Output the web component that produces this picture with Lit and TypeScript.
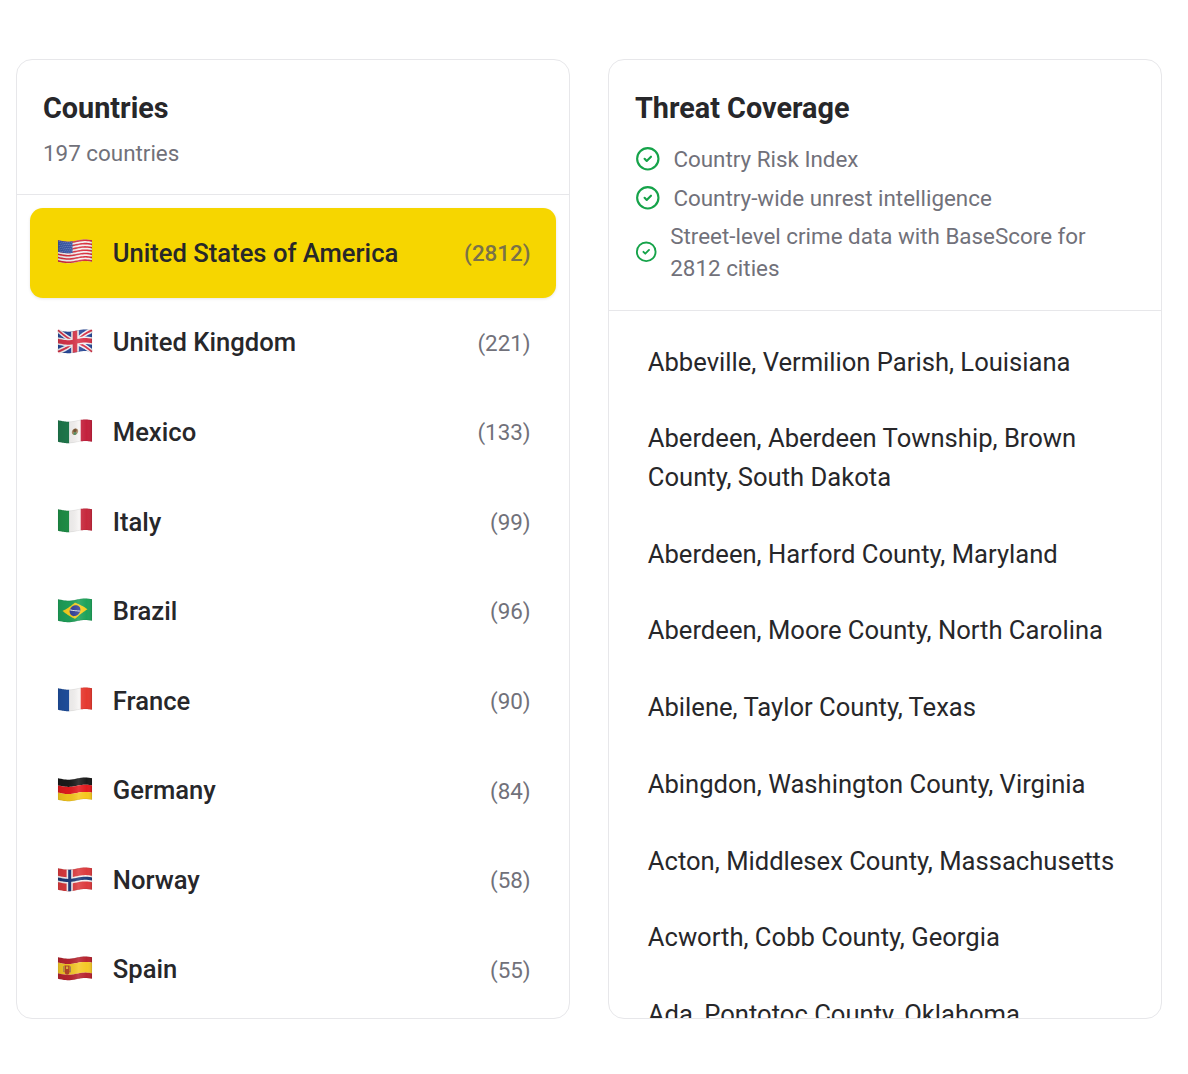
import { LitElement, html, css, svg } from "lit";
import { customElement } from "lit/decorators.js";

type Pt = [number, number];
const W = 34, H = 21.5;
const off = (u: number) => 1.1 + 1.1 * Math.cos(2 * Math.PI * (u / W - 0.3));
const warpPoly = (pts: Pt[]) => {
  const out: string[] = [];
  for (let i = 0; i < pts.length; i++) {
    const [a, b] = pts[i];
    const [c, d] = pts[(i + 1) % pts.length];
    const n = Math.max(1, Math.ceil(Math.hypot(c - a, d - b)));
    for (let k = 0; k < n; k++) {
      const u = a + ((c - a) * k) / n;
      const v = b + ((d - b) * k) / n;
      out.push(`${(u + 1).toFixed(2)} ${(v + off(u) + 0.5).toFixed(2)}`);
    }
  }
  return "M" + out.join("L") + "Z";
};
const R = (x: number, y: number, w: number, h: number, fill: string, op = 1) =>
  svg`<path d=${warpPoly([[x, y], [x + w, y], [x + w, y + h], [x, y + h]])} fill=${fill} opacity=${op}></path>`;
const P = (pts: Pt[], fill: string) => svg`<path d=${warpPoly(pts)} fill=${fill}></path>`;
const C = (cx: number, cy: number, r: number, fill: string) => {
  const pts: Pt[] = [];
  for (let i = 0; i < 20; i++) pts.push([cx + r * Math.cos((i * Math.PI) / 10), cy + r * Math.sin((i * Math.PI) / 10)]);
  return P(pts, fill);
};
const diag = (x0: number, y0: number, x1: number, y1: number, t: number): Pt[] => {
  const dx = x1 - x0, dy = y1 - y0, l = Math.hypot(dx, dy);
  const nx = (-dy / l) * t, ny = (dx / l) * t;
  return [[x0 + nx, y0 + ny], [x1 + nx, y1 + ny], [x1 - nx, y1 - ny], [x0 - nx, y0 - ny]];
};

const flags: Record<string, () => unknown[]> = {
  us: () => {
    const out: unknown[] = [R(0, 0, W, H, "#f4f1f1")];
    const sh = H / 13;
    for (let i = 0; i < 13; i += 2) out.push(R(0, i * sh, W, sh * 0.95, "#d8303f"));
    out.push(R(0, 0, 14.5, sh * 7, "#3c5aa8"));
    for (let r = 0; r < 6; r++)
      for (let c = 0; c < 7; c++) out.push(R(0.8 + c * 2 + (r % 2), 0.8 + r * 1.85, 0.7, 0.7, "#aab8dc"));
    return out;
  },
  uk: () => [
    R(0, 0, W, H, "#2a4a9a"),
    P(diag(0, 0, W, H, 2.4), "#f3f1f3"),
    P(diag(W, 0, 0, H, 2.4), "#f3f1f3"),
    P(diag(0, 0, W, H, 0.9), "#d8354a"),
    P(diag(W, 0, 0, H, 0.9), "#d8354a"),
    R(13.2, 0, 7.6, H, "#f3f1f3"),
    R(0, 7, W, 7.5, "#f3f1f3"),
    R(14.7, 0, 4.6, H, "#d8354a"),
    R(0, 8.5, W, 4.5, "#d8354a"),
  ],
  mx: () => [
    R(0, 0, 11.3, H, "#1f7a4d"),
    R(11.3, 0, 11.4, H, "#f5f3f2"),
    R(22.7, 0, 11.3, H, "#c3203c"),
    C(17, 10.8, 3.2, "#a98a62"),
    C(17, 9.6, 1.8, "#6e4a2a"),
    C(17, 12.6, 1.5, "#4f8c5e"),
  ],
  it: () => [R(0, 0, 11.3, H, "#1f9148"), R(11.3, 0, 11.4, H, "#f5f3f2"), R(22.7, 0, 11.3, H, "#c6283c")],
  br: () => [
    R(0, 0, W, H, "#1ea25a"),
    P([[4.5, 10.75], [17, 2.6], [29.5, 10.75], [17, 18.9]], "#f6ce21"),
    C(17, 10.75, 5.4, "#33409a"),
    P(diag(12, 9.2, 22, 12.2, 0.45), "#e9edf2"),
  ],
  fr: () => [R(0, 0, 11.3, H, "#1f4f9e"), R(11.3, 0, 11.4, H, "#f5f3f2"), R(22.7, 0, 11.3, H, "#e5392f")],
  de: () => [R(0, 0, W, 7.2, "#1a1a1a"), R(0, 7.2, W, 7.2, "#e21a1e"), R(0, 14.4, W, 7.1, "#f6c81e")],
  no: () => [
    R(0, 0, W, H, "#dc3b3e"),
    R(8.6, 0, 6.2, H, "#f4f1f1"),
    R(0, 7.6, W, 6.3, "#f4f1f1"),
    R(10.2, 0, 3, H, "#1d3b78"),
    R(0, 9.2, W, 3.1, "#1d3b78"),
  ],
  es: () => [
    R(0, 0, W, 5.4, "#b8242f"),
    R(0, 5.4, W, 10.7, "#f5c827"),
    R(0, 16.1, W, 5.4, "#b8242f"),
    R(6.6, 6.8, 5, 6.6, "#b5452a"),
    R(8, 7.8, 2.2, 2.6, "#e6b73a"),
    R(5.2, 7.8, 1, 6, "#a8875a"),
    R(12, 7.8, 1, 6, "#a8875a"),
    C(9.1, 13.6, 2.4, "#b5452a"),
  ],
};

const flag = (code: string) => html`<svg class="flag" viewBox="0 0 36 26" width="36" height="26" aria-hidden="true">
  <defs>
    <linearGradient id="sh-${code}" x1="0" x2="1" y1="0" y2="0">
      <stop offset="0" stop-color="#000" stop-opacity="0.1"></stop>
      <stop offset="0.28" stop-color="#000" stop-opacity="0.04"></stop>
      <stop offset="0.6" stop-color="#fff" stop-opacity="0.12"></stop>
      <stop offset="0.85" stop-color="#fff" stop-opacity="0"></stop>
      <stop offset="1" stop-color="#000" stop-opacity="0.1"></stop>
    </linearGradient>
  </defs>
  ${flags[code]()}
  <path d=${warpPoly([[0, 0], [W, 0], [W, H], [0, H]])} fill="url(#sh-${code})"></path>
  <path d=${warpPoly([[0.2, 0.2], [W - 0.2, 0.2], [W - 0.2, H - 0.2], [0.2, H - 0.2]])} fill="none" stroke="#000" stroke-opacity="0.12" stroke-width="0.5"></path>
</svg>`;

const countries = [
  ["us", "United States of America", "2812"],
  ["uk", "United Kingdom", "221"],
  ["mx", "Mexico", "133"],
  ["it", "Italy", "99"],
  ["br", "Brazil", "96"],
  ["fr", "France", "90"],
  ["de", "Germany", "84"],
  ["no", "Norway", "58"],
  ["es", "Spain", "55"],
];
const coverage = [
  "Country Risk Index",
  "Country-wide unrest intelligence",
  "Street-level crime data with BaseScore for 2812 cities",
];
const cities = [
  "Abbeville, Vermilion Parish, Louisiana",
  "Aberdeen, Aberdeen Township, Brown County, South Dakota",
  "Aberdeen, Harford County, Maryland",
  "Aberdeen, Moore County, North Carolina",
  "Abilene, Taylor County, Texas",
  "Abingdon, Washington County, Virginia",
  "Acton, Middlesex County, Massachusetts",
  "Acworth, Cobb County, Georgia",
  "Ada, Pontotoc County, Oklahoma",
];

@customElement("app-root")
export class AppRoot extends LitElement {
  static styles = css`
    :host {
      display: block;
      box-sizing: border-box;
      height: 1074px;
      padding: 59px 26px 0 16px;
      background: #fff;
      font-family: Roboto, "Noto Sans", sans-serif;
      color: #27272a;
    }
    .columns {
      display: grid;
      grid-template-columns: 554px 554px;
      gap: 38px;
    }
    .card {
      box-sizing: border-box;
      height: 960px;
      border: 1px solid #e7e7ea;
      border-radius: 16px;
      overflow: hidden;
      display: flex;
      flex-direction: column;
    }
    .head {
      padding: 25.6px 25.6px 25.6px 26px;
      border-bottom: 1px solid #e7e7ea;
      flex: none;
    }
    .coverage-head {
      padding-bottom: 26px;
    }
    h2 {
      margin: 0;
      font-size: 28.8px;
      line-height: 44.8px;
      font-weight: 700;
    }
    .sub {
      margin: 6.4px 0 0;
      font-size: 22.4px;
      line-height: 32px;
      color: #71717a;
    }
    .rows {
      padding: 12.8px;
      display: flex;
      flex-direction: column;
    }
    .row {
      height: 89.6px;
      flex: none;
      box-sizing: border-box;
      padding: 0 25.6px;
      border-radius: 12.8px;
      display: flex;
      align-items: center;
    }
    .row.active {
      background: #f6d600;
      box-shadow: 0 1px 3px rgba(0, 0, 0, 0.1);
    }
    .flag {
      flex: none;
      margin: 0 19.4px 1px 2px;
      filter: blur(0.3px);
    }
    .name {
      flex: 1;
      margin-bottom: 0.5px;
      font-size: 25.6px;
      font-weight: 500;
    }
    .count {
      font-size: 22.4px;
      color: #71717a;
    }
    .active .count {
      font-weight: 500;
      color: #7a7248;
    }
    .checks {
      list-style: none;
      margin: 12.8px 0 0;
      padding: 0;
      display: flex;
      flex-direction: column;
      gap: 6.4px;
    }
    .checks li {
      display: flex;
      align-items: center;
      gap: 12.8px;
      font-size: 22.4px;
      line-height: 32px;
      color: #71717a;
    }
    .check {
      width: 25.6px;
      height: 25.6px;
      color: #16a34a;
    }
    .cities {
      list-style: none;
      margin: 0;
      padding: 12.4px 12.8px 0;
      flex: 1;
      min-height: 0;
      overflow: hidden;
    }
    .cities li {
      padding: 19.2px 25.6px 19.2px 26px;
      font-size: 25.6px;
      line-height: 38.4px;
      color: #27272a;
    }
  `;

  render() {
    return html`<div class="columns">
      <section class="card">
        <header class="head">
          <h2>Countries</h2>
          <p class="sub">197 countries</p>
        </header>
        <div class="rows">
          ${countries.map(
            ([code, name, n], i) => html`<div class="row ${i === 0 ? "active" : ""}">
              ${flag(code)}<span class="name">${name}</span><span class="count">(${n})</span>
            </div>`
          )}
        </div>
      </section>
      <section class="card">
        <header class="head coverage-head">
          <h2>Threat Coverage</h2>
          <ul class="checks">
            ${coverage.map(
              (t) => html`<li>
                <svg class="check" viewBox="0 0 24 24" fill="none" stroke="currentColor" stroke-width="2" stroke-linecap="round" stroke-linejoin="round">
                  <circle cx="12" cy="12" r="10"></circle>
                  <path d="m9 12 2 2 4-4"></path>
                </svg>
                <span>${t}</span>
              </li>`
            )}
          </ul>
        </header>
        <ul class="cities">
          ${cities.map((c) => html`<li>${c}</li>`)}
        </ul>
      </section>
    </div>`;
  }
}
